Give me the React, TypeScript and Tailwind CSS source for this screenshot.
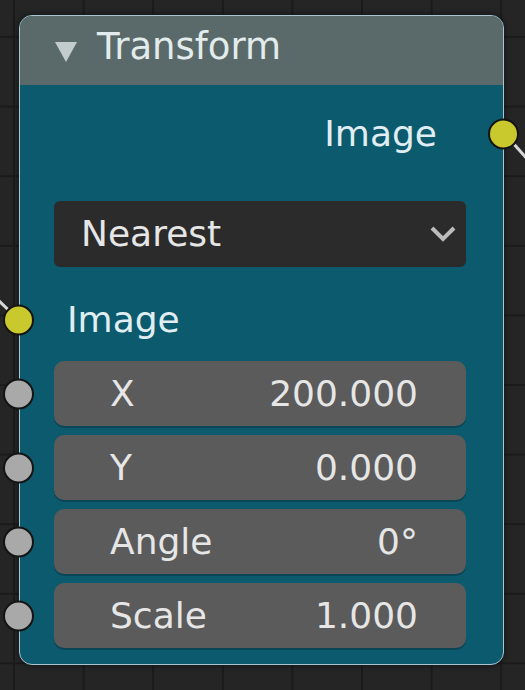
import React from "react";

const font = { fontFamily: '"DejaVu Sans", sans-serif' };

function Socket({ color, side }: { color: "yellow" | "gray"; side: "left" | "right" }) {
  return (
    <div
      className={
        "absolute top-1/2 -translate-y-1/2 w-[31px] h-[31px] rounded-full border-2 border-[#141414] " +
        (color === "yellow" ? "bg-[#c9c82c] " : "bg-[#a9a9a9] ") +
        (side === "left" ? "left-[-16px]" : "right-[-16px]")
      }
    />
  );
}

function ValueRow({ label, value }: { label: string; value: string }) {
  return (
    <div className="relative h-[65px]">
      <div className="absolute left-[-35px] top-0 h-full w-0">
        <Socket color="gray" side="left" />
      </div>
      <div className="h-full rounded-[10px] bg-[#5b5b5b] shadow-[0_2px_0_#0a4656] flex items-center justify-between pl-[56px] pr-[48px] text-[36px] text-[#e6e6e6]">
        <span>{label}</span>
        <span>{value}</span>
      </div>
    </div>
  );
}

export default function App() {
  return (
    <div
      className="relative w-[525px] h-[690px] overflow-hidden bg-[#252525] bg-[image:linear-gradient(to_right,#1b1b1b_2px,transparent_2px),linear-gradient(to_bottom,#1b1b1b_2px,transparent_2px)] bg-[size:69.6px_69.6px] bg-[position:13px_36px] pl-[19px] pt-[15px]"
      style={font}
    >
      <svg className="absolute inset-0" width="525" height="690">
        <line x1="-2" y1="300" x2="19" y2="320" stroke="#d8d8d8" strokeWidth="3" />
        <line x1="504" y1="133" x2="530" y2="162" stroke="#d8d8d8" strokeWidth="3" />
      </svg>
      <div className="relative w-[485px] h-[650px] rounded-[13px] border border-[#a9c6d0] bg-[#0b5a6e] shadow-[0_0_6px_rgba(0,0,0,0.5)]">
        <div className="h-[69px] rounded-t-[12px] bg-[#5a6a6a] flex items-center pl-[35px] pb-[8px] text-[37px] text-[#e3ecec]">
          <svg width="22" height="20" viewBox="0 0 22 20" className="mr-[20px] mt-[10px]">
            <polygon points="0,0 22,0 11,20" fill="#c3cccc" />
          </svg>
          <span>Transform</span>
        </div>
        <div className="pl-[34px] pr-[37px] pt-[16px] pb-[16px] flex flex-col">
          <div className="relative h-[66px] flex items-center justify-end pr-[29px] text-[36px] text-[#e0eef2]">
            <span>Image</span>
            <div className="absolute right-[-37px] top-0 h-full w-0">
              <Socket color="yellow" side="right" />
            </div>
          </div>
          <div className="mt-[34px] h-[66px] rounded-[6px] bg-[#2b2b2b] flex items-center justify-between pl-[27px] pr-[10px] text-[36px] text-[#e6e6e6]">
            <span>Nearest</span>
            <svg width="26" height="16" viewBox="0 0 26 16">
              <polyline points="2,2 13,13 24,2" fill="none" stroke="#bcbcbc" strokeWidth="4" />
            </svg>
          </div>
          <div className="relative mt-[20px] h-[66px] flex items-center pl-[13px] text-[36px] text-[#e0eef2]">
            <span>Image</span>
            <div className="absolute left-[-35px] top-0 h-full w-0">
              <Socket color="yellow" side="left" />
            </div>
          </div>
          <div className="mt-[8px] flex flex-col gap-[9px]">
            <ValueRow label="X" value="200.000" />
            <ValueRow label="Y" value="0.000" />
            <ValueRow label="Angle" value="0°" />
            <ValueRow label="Scale" value="1.000" />
          </div>
        </div>
      </div>
    </div>
  );
}
